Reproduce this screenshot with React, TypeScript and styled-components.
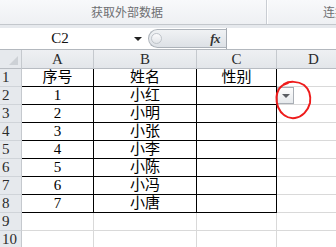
import React from "react";
import styled, { createGlobalStyle } from "styled-components";

const GlobalStyle = createGlobalStyle`
  html, body { margin: 0; padding: 0; background: #fff; overflow: hidden; }
  #root { width: 336px; height: 247px; }
`;

const CJK = `"Noto Sans CJK SC", "Noto Sans", sans-serif`;
const LATIN = `"Liberation Serif", "Noto Sans CJK SC", serif`;

const Page = styled.div`
  position: relative;
  width: 336px;
  height: 247px;
  overflow: hidden;
  font-family: ${CJK};
  background: #fff;
`;

const Ribbon = styled.div`
  display: flex;
  height: 24px;
  background: linear-gradient(#f8f9fb, #eef0f3);
  border-bottom: 1px solid #c3c7cc;
`;

const RibbonGroup = styled.div<{ $w?: number; $pl?: number; $pr?: number }>`
  flex: ${(p) => (p.$w ? "none" : "1")};
  width: ${(p) => (p.$w ? `${p.$w}px` : "auto")};
  display: flex;
  align-items: center;
  justify-content: ${(p) => (p.$w ? "center" : "flex-start")};
  padding-left: ${(p) => p.$pl ?? 0}px;
  padding-right: ${(p) => p.$pr ?? 0}px;
  box-sizing: border-box;
  font-size: 12px;
  line-height: 1;
  color: #6e6f72;
  white-space: nowrap;
  overflow: hidden;
`;

const RibbonSep = styled.div`
  flex: none;
  width: 1px;
  background: #c9cdd3;
  box-shadow: 1px 0 0 #ffffff;
`;

const Band = styled.div`
  height: 3px;
  background: #e6e9ed;
`;

const FormulaBar = styled.div`
  display: flex;
  height: 21px;
  background: #fff;
  border-bottom: 1px solid #b3b8be;
`;

const NameBox = styled.div`
  flex: none;
  width: 148px;
  display: flex;
  align-items: center;
`;

const NameText = styled.div`
  width: 120px;
  text-align: center;
  font-family: ${LATIN};
  font-size: 15px;
  color: #111;
`;

const DownTri = styled.div<{ $c?: string }>`
  width: 0;
  height: 0;
  border-left: 4px solid transparent;
  border-right: 4px solid transparent;
  border-top: 4px solid ${(p) => p.$c ?? "#333"};
`;

const NameArrow = styled.div`
  margin-left: 14px;
  display: flex;
  align-items: center;
`;

const Pill = styled.div`
  flex: none;
  width: 78px;
  height: 19px;
  margin-top: 1px;
  box-sizing: border-box;
  border: 1px solid #adb3ba;
  border-right: none;
  border-radius: 10px 0 0 10px;
  background: linear-gradient(#f0f2f4, #dde1e6);
  display: flex;
  align-items: center;
  justify-content: space-between;
  padding: 0 6px 0 2px;
`;

const Knob = styled.div`
  width: 11px;
  height: 11px;
  border-radius: 50%;
  border: 1px solid #bfc4ca;
  background: linear-gradient(#fbfbfc, #e2e5e9);
  box-sizing: border-box;
`;

const Fx = styled.span`
  font-family: "Liberation Serif", serif;
  font-style: italic;
  font-weight: bold;
  font-size: 13px;
  color: #333;
  letter-spacing: -0.5px;
`;

const FormulaInput = styled.div`
  flex: 1;
  border-left: 1px solid #a6abb2;
  background: #fff;
`;

const Grid = styled.div`
  display: grid;
  grid-template-columns: 22px 72px 103px 80px 74px;
  grid-template-rows: 19px repeat(10, 18px);
  width: 351px;
`;

const Corner = styled.div`
  position: relative;
  background: #e6e9ed;
  border-right: 1px solid #c5c9ce;
  border-bottom: 1px solid #b8bcc2;
  box-sizing: border-box;
  &::after {
    content: "";
    position: absolute;
    right: 3px;
    bottom: 3px;
    width: 0;
    height: 0;
    border-left: 9px solid transparent;
    border-bottom: 9px solid #cdd1d6;
  }
`;

const ColHead = styled.div`
  background: linear-gradient(#eef0f3, #e3e6ea);
  border-right: 1px solid #c5c9ce;
  border-bottom: 1px solid #b8bcc2;
  box-sizing: border-box;
  display: flex;
  align-items: center;
  justify-content: center;
  font-family: ${LATIN};
  font-size: 15px;
  color: #2b2b2b;
`;

const RowHead = styled.div`
  background: #e6e9ed;
  border-right: 1px solid #c5c9ce;
  border-bottom: 1px solid #d0d4d9;
  box-sizing: border-box;
  display: flex;
  align-items: center;
  padding-left: 2px;
  font-family: ${LATIN};
  font-size: 15px;
  color: #2b2b2b;
  overflow: hidden;
`;

const Cell = styled.div<{ $table?: boolean }>`
  position: relative;
  border-right: 1px solid ${(p) => (p.$table ? "#000" : "#d9d9d9")};
  border-bottom: 1px solid ${(p) => (p.$table ? "#000" : "#d9d9d9")};
  box-sizing: border-box;
  display: flex;
  align-items: center;
  justify-content: center;
  font-family: ${LATIN};
  font-size: 15px;
  line-height: 1;
  color: #000;
  white-space: nowrap;
`;

const DropButton = styled.div`
  position: absolute;
  left: 0;
  top: 0;
  width: 17px;
  height: 17px;
  box-sizing: border-box;
  border: 1px solid #a9aeb5;
  background: linear-gradient(#fdfdfd, #e6e9ec);
  display: flex;
  align-items: center;
  justify-content: center;
`;

const RedMark = styled.svg`
  position: absolute;
  left: 270px;
  top: 76px;
  pointer-events: none;
`;

const rows: [string, string, string][] = [
  ["序号", "姓名", "性别"],
  ["1", "小红", ""],
  ["2", "小明", ""],
  ["3", "小张", ""],
  ["4", "小李", ""],
  ["5", "小陈", ""],
  ["6", "小冯", ""],
  ["7", "小唐", ""],
];

export default function App() {
  const allRows = Array.from({ length: 10 }, (_, i) => i);
  return (
    <Page>
      <GlobalStyle />
      <Ribbon>
        <RibbonGroup $w={266} $pr={12}>获取外部数据</RibbonGroup>
        <RibbonSep />
        <RibbonGroup $pl={56}>连接</RibbonGroup>
      </Ribbon>
      <Band />
      <FormulaBar>
        <NameBox>
          <NameText>C2</NameText>
          <NameArrow>
            <DownTri $c="#222" />
          </NameArrow>
        </NameBox>
        <Pill>
          <Knob />
          <Fx>fx</Fx>
        </Pill>
        <FormulaInput />
      </FormulaBar>
      <Grid>
        <Corner />
        {["A", "B", "C", "D"].map((c) => (
          <ColHead key={c}>{c}</ColHead>
        ))}
        {allRows.map((i) => {
          const data = rows[i];
          return (
            <React.Fragment key={i}>
              <RowHead>{i + 1}</RowHead>
              {[0, 1, 2].map((j) => (
                <Cell key={j} $table={!!data}>
                  {data ? data[j] : ""}
                </Cell>
              ))}
              <Cell>
                {i === 1 && (
                  <DropButton>
                    <DownTri $c="#5a5d62" />
                  </DropButton>
                )}
              </Cell>
            </React.Fragment>
          );
        })}
      </Grid>
      <RedMark width="46" height="48" viewBox="270 76 46 48">
        <path
          d="M284 84 C289 81 298 81 304 85 C309 89 311 96 310 103 C308 111 302 117 295 118 C287 119 281 114 278 107 C276 101 276 94 279 89 C281 86 284 84 288 83"
          fill="none"
          stroke="#ee1c1c"
          strokeWidth="2"
          strokeLinecap="round"
        />
      </RedMark>
    </Page>
  );
}
